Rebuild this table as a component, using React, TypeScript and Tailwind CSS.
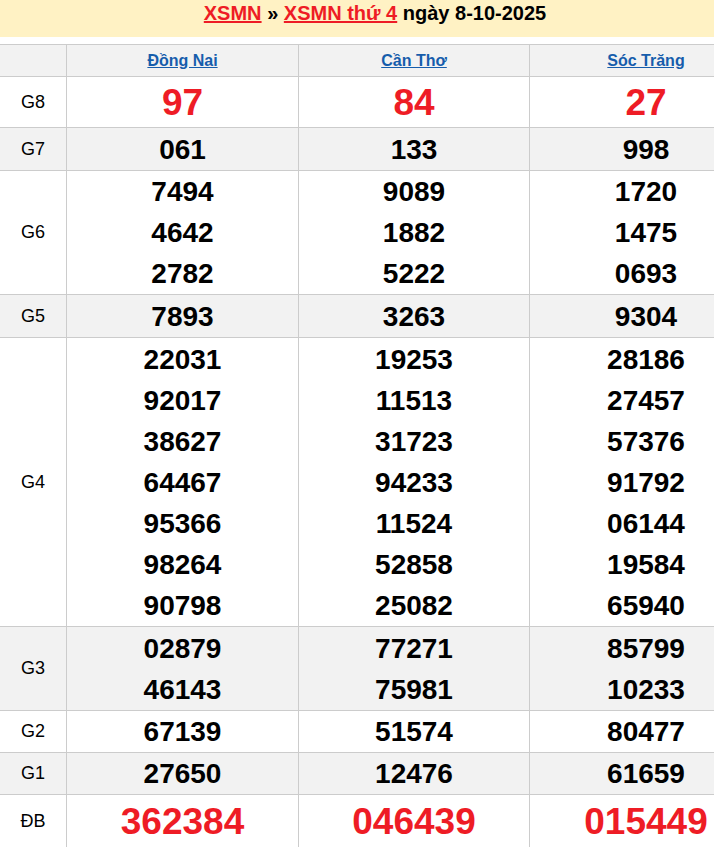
import React from "react";

type Row = { label: string; h: string; big?: boolean; gray?: boolean; vals: string[][] };

const rows: Row[] = [
  { label: "G8", h: "h-[50px]", big: true, vals: [["97"], ["84"], ["27"]] },
  { label: "G7", h: "h-[42px]", gray: true, vals: [["061"], ["133"], ["998"]] },
  {
    label: "G6",
    h: "h-[123px]",
    vals: [
      ["7494", "4642", "2782"],
      ["9089", "1882", "5222"],
      ["1720", "1475", "0693"],
    ],
  },
  { label: "G5", h: "h-[42px]", gray: true, vals: [["7893"], ["3263"], ["9304"]] },
  {
    label: "G4",
    h: "h-[288px]",
    vals: [
      ["22031", "92017", "38627", "64467", "95366", "98264", "90798"],
      ["19253", "11513", "31723", "94233", "11524", "52858", "25082"],
      ["28186", "27457", "57376", "91792", "06144", "19584", "65940"],
    ],
  },
  {
    label: "G3",
    h: "h-[83px]",
    gray: true,
    vals: [
      ["02879", "46143"],
      ["77271", "75981"],
      ["85799", "10233"],
    ],
  },
  { label: "G2", h: "h-[41px]", vals: [["67139"], ["51574"], ["80477"]] },
  { label: "G1", h: "h-[41px]", gray: true, vals: [["27650"], ["12476"], ["61659"]] },
  { label: "ĐB", h: "h-[53px]", big: true, vals: [["362384"], ["046439"], ["015449"]] },
];

const provinces = ["Đồng Nai", "Cần Thơ", "Sóc Trăng"];

export default function App() {
  return (
    <div
      className="w-[714px] h-[847px] overflow-hidden bg-white"
      style={{ fontFamily: '"Liberation Sans", Arial, sans-serif' }}
    >
      <div className="h-[37px] w-[750px] bg-[#fff2c4] pt-px text-center text-[20px] font-bold leading-[24px] text-black">
        <a className="text-[#ee1c25] underline">XSMN</a> » <a className="text-[#ee1c25] underline">XSMN thứ 4</a> ngày 8-10-2025
      </div>
      <div className="mt-[7px] w-[762px] border-t border-[#cccccc]">
        <div className="grid grid-cols-[67px_232px_231px_232px] border-b border-[#cccccc] bg-[#f2f2f2]">
          <div className="h-[31px] border-r border-[#cccccc]" />
          {provinces.map((p, i) => (
            <div
              key={p}
              className={`flex h-[31px] items-center justify-center ${i < 2 ? "border-r border-[#cccccc]" : ""}`}
            >
              <a className="text-[16px] font-bold text-[#165dac] underline">{p}</a>
            </div>
          ))}
        </div>
        {rows.map((r) => (
          <div
            key={r.label}
            className={`grid grid-cols-[67px_232px_231px_232px] border-b border-[#cccccc] ${r.gray ? "bg-[#f2f2f2]" : "bg-white"}`}
          >
            <div className={`flex ${r.h} items-center justify-center border-r border-[#cccccc] text-[18px] text-black`}>
              {r.label}
            </div>
            {r.vals.map((col, ci) => (
              <div
                key={ci}
                className={`flex ${r.h} flex-col items-center justify-center ${ci < 2 ? "border-r border-[#cccccc]" : ""}`}
              >
                {col.map((v) =>
                  r.big ? (
                    <div key={v} className="text-[37px] font-bold leading-[41px] text-[#ee1c25]">
                      {v}
                    </div>
                  ) : (
                    <div key={v} className="text-[28px] font-bold leading-[41px] text-black">
                      {v}
                    </div>
                  )
                )}
              </div>
            ))}
          </div>
        ))}
      </div>
    </div>
  );
}
